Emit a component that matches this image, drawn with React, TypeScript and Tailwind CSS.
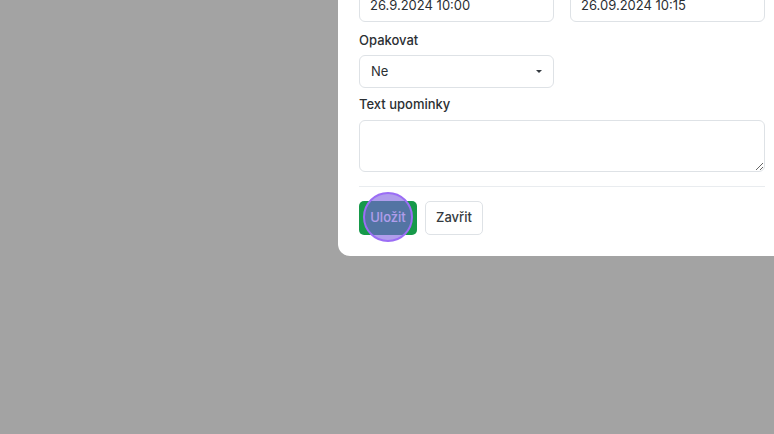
import React from "react";

export default function App() {
  return (
    <div className="w-[774px] h-[434px] overflow-hidden bg-[#a3a3a3] pl-[338px]" style={{ fontFamily: "Inter, 'Noto Sans', sans-serif" }}>
      <div className="relative w-[460px] -mt-[30px] bg-white rounded-bl-[12px] pt-[20px] pl-[21px] pb-[21px] text-[#2b2f33]">
        <div className="w-[406px]">
          <div className="grid grid-cols-2 gap-[16px]">
            <div className="h-[32px] border border-[#dee2e6] rounded-[6px] px-[10px] flex items-center text-[13px]">26.9.2024 10:00</div>
            <div className="h-[32px] border border-[#dee2e6] rounded-[6px] px-[10px] flex items-center text-[13px]">26.09.2024 10:15</div>
          </div>
          <div className="mt-[8px] mb-[5px] text-[13px] leading-[20px] font-medium">Opakovat</div>
          <div className="w-[195px] h-[33px] border border-[#dee2e6] rounded-[6px] pl-[11px] pr-[10px] flex items-center justify-between text-[13px]">
            <span>Ne</span>
            <svg width="8" height="5" viewBox="0 0 8 5"><path d="M1 1 L4 4 L7 1 Z" fill="#343a40" /></svg>
          </div>
          <div className="mt-[6px] mb-[6px] text-[13px] leading-[20px] font-medium">Text upominky</div>
          <textarea className="block w-full h-[52px] border border-[#dee2e6] rounded-[6px] resize-y outline-none" />
          <div className="mt-[14px] border-t border-[#e9ecef]" />
          <div className="mt-[14px] flex gap-[8px]">
            <div className="relative">
              <button className="h-[34px] w-[58px] rounded-[5px] bg-[#17994a] text-white text-[13px] font-medium">Uložit</button>
              <div className="absolute left-[4px] top-[-9px] w-[50px] h-[50px] rounded-full bg-[#7c5ce0]/60 border-[2px] border-[#9b6df5]" />
            </div>
            <button className="h-[34px] w-[58px] rounded-[5px] border border-[#dee2e6] bg-white text-[#343a40] text-[13px] font-medium">Zavřit</button>
          </div>
        </div>
      </div>
    </div>
  );
}
